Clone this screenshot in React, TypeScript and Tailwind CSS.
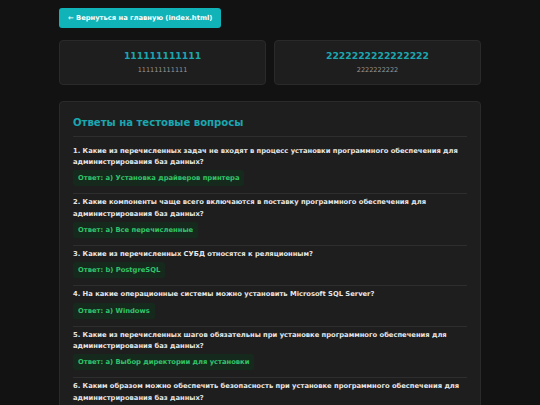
import React from "react";

const items = [
  {
    q: "1. Какие из перечисленных задач не входят в процесс установки программного обеспечения для администрирования баз данных?",
    a: "Ответ: a) Установка драйверов принтера",
  },
  {
    q: "2. Какие компоненты чаще всего включаются в поставку программного обеспечения для администрирования баз данных?",
    a: "Ответ: a) Все перечисленные",
  },
  {
    q: "3. Какие из перечисленных СУБД относятся к реляционным?",
    a: "Ответ: b) PostgreSQL",
  },
  {
    q: "4. На какие операционные системы можно установить Microsoft SQL Server?",
    a: "Ответ: a) Windows",
  },
  {
    q: "5. Какие из перечисленных шагов обязательны при установке программного обеспечения для администрирования баз данных?",
    a: "Ответ: a) Выбор директории для установки",
  },
  {
    q: "6. Каким образом можно обеспечить безопасность при установке программного обеспечения для администрирования баз данных?",
    a: "Ответ: a) Использование надежных паролей",
  },
];

export default function App() {
  return (
    <div
      className="min-h-screen bg-[#121212] text-[#e0e0e0]"
      style={{ fontFamily: '"DejaVu Sans", Verdana, sans-serif' }}
    >
      <div className="mx-auto w-[422px] pt-[8px]">
        <button className="block h-[20px] rounded-[3px] bg-[#0fb3b8] px-[9px] text-[6.75px] font-bold leading-[20px] text-white">
          ← Вернуться на главную (index.html)
        </button>
        <div className="mt-[12px] grid grid-cols-2 gap-[8px]">
          <div className="flex h-[45px] flex-col items-center justify-center rounded-[4px] border border-[#2a2a2a] bg-[#1e1e1e]">
            <div className="text-[9.25px] font-bold leading-[12px] text-[#1ba6b0]">111111111111</div>
            <div className="mt-[3.5px] text-[6.5px] leading-[9px] text-[#9a9a9a]">111111111111</div>
          </div>
          <div className="flex h-[45px] flex-col items-center justify-center rounded-[4px] border border-[#2a2a2a] bg-[#1e1e1e]">
            <div className="text-[9.25px] font-bold leading-[12px] text-[#1ba6b0]">2222222222222222</div>
            <div className="mt-[3.5px] text-[6.5px] leading-[9px] text-[#9a9a9a]">2222222222</div>
          </div>
        </div>
        <div className="mt-[16px] rounded-[4px] border border-[#2a2a2a] bg-[#1e1e1e] px-[13px] pt-[13px] pb-[20px]">
          <h2 className="border-b border-[#2e2e2e] pb-[5px] text-[10.1px] font-bold leading-[16px] text-[#1ba6b0]">
            Ответы на тестовые вопросы
          </h2>
          <div className="mt-[5.5px]">
            {items.map((it, i) => (
              <div key={i} className="border-b border-[#2e2e2e] pt-[3px] pb-[7px]">
                <div className="text-[6.75px] font-bold leading-[11.5px] text-[#e6e6e6]">{it.q}</div>
                <div className="mt-[1.75px] w-fit rounded-[2px] bg-[#16291d] px-[5px] text-[6.75px] font-bold leading-[16px] text-[#31c46b]">
                  {it.a}
                </div>
              </div>
            ))}
          </div>
        </div>
      </div>
    </div>
  );
}
